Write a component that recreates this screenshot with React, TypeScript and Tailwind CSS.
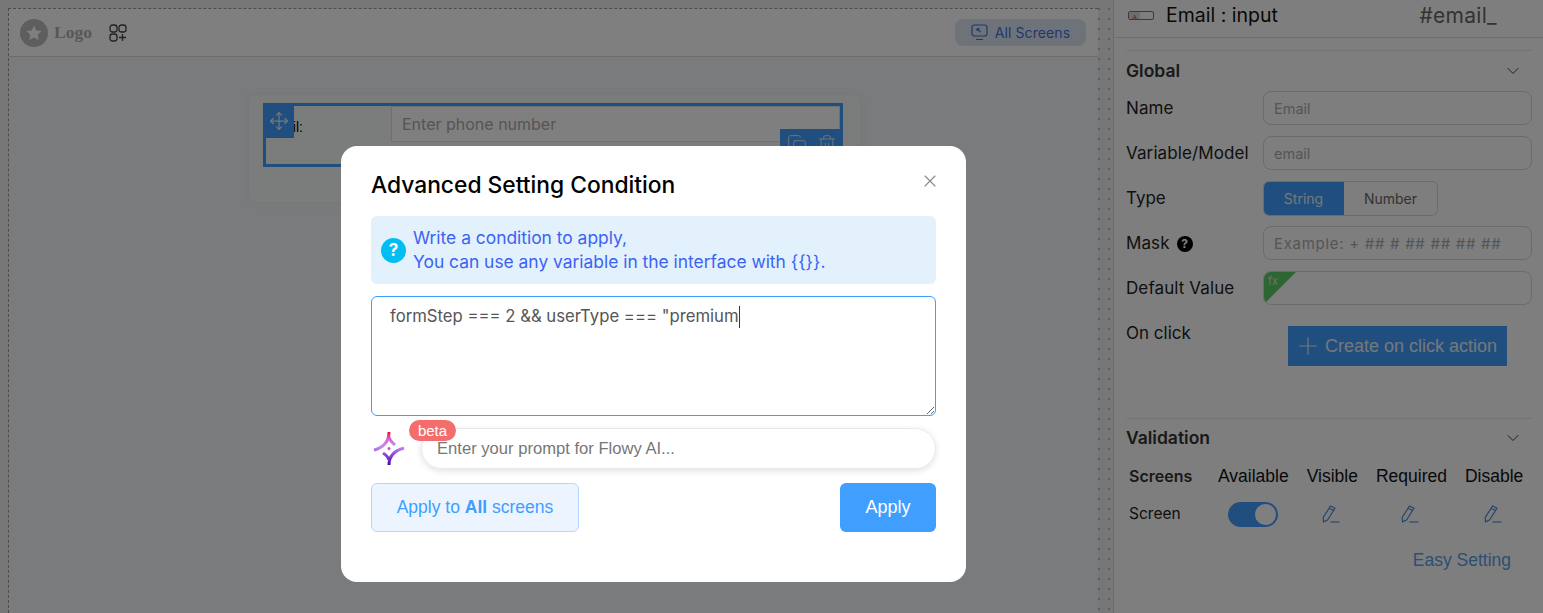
import React from 'react';
import { Plus, ChevronDown, X, Move, Copy, Trash2 } from 'lucide-react';

const dm = "font-['Inter','Noto_Sans',sans-serif]";
const ar = "font-['Liberation_Sans',Arial,sans-serif]";

const PenIcon = () => (
  <svg width="18" height="18" viewBox="0 0 18 18" fill="none" stroke="#3f86d8" strokeWidth="1.1">
    <path d="M8.5 1 L13 3.2 L5.500 15 L1.500 16.800 L1.200 12.500 Z" />
    <path d="M7.300 3.400 L11.800 5.500" />
    <path d="M8.500 17 H17.500" />
  </svg>
);

const Field = ({ label, placeholder, wide }: { label: React.ReactNode; placeholder: string; wide?: boolean }) => (
  <div className="flex items-center h-[34px]">
    <div className="w-[137px] pt-[2px] text-[17px] tracking-[0.1px] text-[#222] shrink-0">{label}</div>
    <input
      readOnly
      placeholder={placeholder}
      className={`flex-1 min-w-0 h-[34px] px-[10px] rounded-lg border border-[#d4d7de] bg-transparent outline-none placeholder:text-[#a8abb2] ${wide ? 'text-[15px] tracking-[0.7px]' : 'text-[14.5px]'}`}
    />
  </div>
);

const SidePanel = () => (
  <aside className={`w-[430px] shrink-0 h-[613px] bg-[#fdfdfd] border-l border-[#d8d8d8] ${dm}`}>
    <div className="h-[38px] flex items-center pl-[14px] pr-[46px] pb-[6px] border-b border-[#dcdcdc]">
      <svg width="26" height="10" viewBox="0 0 26 10" fill="none" className="mr-[12px]">
        <rect x="0.5" y="0.5" width="25" height="8" rx="1.5" stroke="#777" />
        <rect x="1" y="1" width="11" height="7" fill="#e5d5d8" />
        <text x="4" y="7.5" fontSize="7" fill="#c33" fontFamily="Liberation Serif">A</text>
      </svg>
      <span className="text-[19.5px] text-[#111]">Email : input</span>
      <span className="ml-auto text-[21px] tracking-[0.3px] text-[#666]">#email_</span>
    </div>
    <div className="px-[12px] pt-[12px] pr-[11px]">
      <div className="border-t border-[#e8e8e8] pt-[8px]">
        <div className="flex items-center justify-between h-[24px] pr-[9px]">
          <span className="text-[17.5px] font-semibold text-[#333]">Global</span>
          <ChevronDown size={20} strokeWidth={1.2} className="text-[#444]" />
        </div>
        <div className="flex flex-col gap-[11px] mt-[8px]">
          <Field label="Name" placeholder="Email" />
          <Field label="Variable/Model" placeholder="email" />
          <div className="flex items-center h-[34px]">
            <div className="w-[137px] pt-[2px] text-[17px] text-[#222]">Type</div>
            <div className="flex h-[35px] w-[175px] rounded-md border border-[#d4d7de] overflow-hidden text-[14px]">
              <div className="w-[81px] bg-[#409eff] text-[#e8f0f8] flex items-center justify-center -m-px mr-0">String</div>
              <div className="flex-1 flex items-center justify-center text-[#666]">Number</div>
            </div>
          </div>
          <Field
            label={
              <span className="flex items-center gap-[7px]">
                Mask
                <span className="w-[16px] h-[16px] rounded-full bg-black text-white text-[12px] font-bold flex items-center justify-center">?</span>
              </span>
            }
            placeholder="Example: + ## # ## ## ## ##"
            wide
          />
          <div className="flex items-center h-[34px]">
            <div className="w-[137px] pt-[2px] text-[17px] tracking-[0.1px] text-[#222] shrink-0">Default Value</div>
            <div className="relative flex-1 h-[34px] rounded-lg border border-[#d4d7de] overflow-hidden">
              <div className="absolute left-0 top-0 w-0 h-0 border-t-[32px] border-r-[32px] border-t-[#5acb66] border-r-transparent" />
              <span className="absolute left-[4px] top-[1px] text-[11px] leading-[16px] text-[#d8e8d8]">fx</span>
            </div>
          </div>
        </div>
        <div className="flex mt-[21px] h-[40px]">
          <div className="w-[162px] text-[17px] text-[#222] mt-[-5px]">On click</div>
          <button className={`w-[219px] h-[40px] bg-[#409eff] text-[#e8f0f8] text-[18px] flex items-center pl-[6px] gap-[3px] ${ar}`}>
            <Plus size={28} strokeWidth={1} />
            Create on click action
          </button>
        </div>
      </div>
      <div className="border-t border-[#e8e8e8] mt-[52px] pt-[7px]">
        <div className="flex items-center justify-between h-[24px] pr-[9px]">
          <span className="text-[17.5px] font-semibold text-[#333]">Validation</span>
          <ChevronDown size={20} strokeWidth={1.2} className="text-[#444]" />
        </div>
        <div className={`flex items-center gap-[18px] mt-[14px] h-[24px] text-[17.5px] text-[#111] ${ar}`}>
          <span className={`w-[74px] pl-[3px] text-[16px] font-semibold text-[#333] ${dm}`}>Screens</span>
          <span>Available</span>
          <span>Visible</span>
          <span>Required</span>
          <span>Disable</span>
        </div>
        <div className="flex items-center mt-[13px] h-[26px]">
          <span className="w-[102px] pl-[3px] text-[15.500px] text-[#222]">Screen</span>
          <div className="w-[50px] h-[25px] rounded-full bg-[#409eff] flex items-center justify-end pr-[2px]">
            <div className="w-[21px] h-[21px] rounded-full bg-white" />
          </div>
          <div className="w-[18px] ml-[44px]"><PenIcon /></div>
          <div className="w-[18px] ml-[61px]"><PenIcon /></div>
          <div className="w-[18px] ml-[65px]"><PenIcon /></div>
        </div>
        <div className={`text-right mt-[20px] pr-[21px] text-[17.5px] text-[#5a9ee8] ${ar}`}>Easy Setting</div>
      </div>
    </div>
  </aside>
);

const Canvas = () => (
  <div className="flex-1 h-[613px] pl-[8px] pt-[8px] pr-[15px] bg-[#eeeeee] bg-[radial-gradient(#bbbbbb_1.5px,transparent_1.5px)] bg-[length:10px_10px] bg-[position:4px_4px]">
    <div className="h-full border-l border-t border-dashed border-[#999] bg-[#f3f6f8]">
      <div className="h-[48px] bg-white border-b border-[#d8d8d8] flex items-center pl-[11px] pr-[12px]">
        <div className="w-[28px] h-[28px] rounded-full bg-[#bdbdbd] flex items-center justify-center">
          <svg width="18" height="18" viewBox="0 0 24 24" fill="#fff"><path d="M12 2l3 6.6 7.2.8-5.3 4.9 1.4 7.1L12 17.9 5.7 21.4l1.4-7.1L1.800 9.400 9 8.600z" /></svg>
        </div>
        <span className="ml-[6px] text-[17.5px] font-bold text-[#b0b0b0] font-['Liberation_Serif',serif]">Logo</span>
        <svg width="18" height="18" viewBox="0 0 18 18" fill="none" stroke="#444" strokeWidth="1.3" className="ml-[17px]">
          <rect x="1" y="1" width="7" height="7" rx="2.5" />
          <rect x="10" y="1" width="7" height="7" rx="2.5" />
          <rect x="1" y="10" width="7" height="7" rx="2.500" />
          <path d="M13.500 10v7M10 13.500h7" />
        </svg>
        <div className={`ml-auto h-[27px] w-[131px] rounded-lg bg-[#dbe7f3] flex items-center justify-center gap-[7px] text-[14px] tracking-[0.1px] text-[#3f6fd8] ${dm}`}>
          <svg width="17" height="17" viewBox="0 0 17 17" fill="none" stroke="#3f6fd8" strokeWidth="1.200">
            <rect x="1" y="1" width="15" height="11" rx="2.500" />
            <path d="M5 15.500h7M6 4.500l3.500 3.500M6 4.500h2.500M6 4.500v2.500" />
          </svg>
          All Screens
        </div>
      </div>
      <div className="pl-[240px] pt-[38px]">
        <div className={`relative w-[611px] h-[107px] rounded-lg bg-[#f6f8f9] shadow-[0_0_10px_rgba(0,0,0,0.05)] ${dm}`}>
          <div className="absolute left-[14px] top-[8px] w-[580px] h-[64px] border-[3px] border-[#409eff]">
            <span className={`absolute left-[-2px] top-[11px] text-[14px] text-black ${ar}`}>Email:</span>
            <div className="absolute left-[125px] top-0 right-0 h-[36px] bg-white border border-[#dcdfe6] flex items-center px-[10px] text-[16px] text-[#aaa]">Enter phone number</div>
          </div>
          <div className="absolute left-[14px] top-[8px] w-[31px] h-[35px] bg-[#409eff] flex items-center justify-center text-[#e8f0f8]">
            <Move size={20} strokeWidth={1.500} />
          </div>
          <div className="absolute left-[531px] top-[34px] w-[63px] h-[40px] bg-[#409eff] flex justify-center gap-[10px] pt-[5px] text-[#e8f0f8]">
            <Copy size={20} strokeWidth={1.100} />
            <Trash2 size={20} strokeWidth={1.100} />
          </div>
        </div>
      </div>
    </div>
  </div>
);

const FlowyMark = () => (
  <svg width="36" height="36" viewBox="6 6 36 36" fill="none" strokeWidth="3" strokeLinecap="butt" className="shrink-0 mt-[3px]">
    <defs>
      <linearGradient id="flowy" gradientUnits="userSpaceOnUse" x1="0" y1="8" x2="0" y2="40">
        <stop offset="0" stopColor="#f5123f" />
        <stop offset="0.18" stopColor="#d860c8" />
        <stop offset="0.42" stopColor="#c090f4" />
        <stop offset="0.68" stopColor="#8a48d8" />
        <stop offset="1" stopColor="#5408a8" />
      </linearGradient>
    </defs>
    <path d="M24 7 Q24 21 9 25" stroke="url(#flowy)" />
    <path d="M24 12 Q25 16 30 20" stroke="url(#flowy)" />
    <path d="M24 40 Q24 27 39 23" stroke="url(#flowy)" />
    <path d="M24 35 Q23 31 18 28" stroke="url(#flowy)" />
    <circle cx="24" cy="23.500" r="1.500" fill="#c050c0" />
  </svg>
);

const Modal = () => (
  <div className="absolute inset-0 bg-black/50 pl-[341px] pt-[146px]">
    <div className={`relative w-[625px] h-[436px] bg-white rounded-2xl px-[30px] ${dm}`}>
      <X size={20} strokeWidth={1.300} className="absolute right-[26px] top-[25px] text-[#888]" />
      <div className="pt-[24px] h-[70px] text-[22.800px] font-medium leading-[30px] text-black">Advanced Setting Condition</div>
      <div className="h-[68px] rounded-md bg-[#e3f1fc] flex items-center pl-[10px] gap-[7px] text-[17.400px] leading-[24px] text-[#3b63f3]">
        <span className="w-[25px] h-[25px] rounded-full bg-[#00bdf2] text-white text-[17px] font-bold flex items-center justify-center">?</span>
        <div>
          <div>Write a condition to apply,</div>
          <div>You can use any variable in the interface with {'{{}}'}.</div>
        </div>
      </div>
      <div className="mt-[12px] h-[120px] resize-y overflow-auto rounded-md border border-[#409eff] pl-[18px] pt-[7px] text-[16.700px] leading-[24px] text-[#555]">
        formStep === 2 &amp;&amp; userType === "premium<span className="inline-block w-px h-[22px] bg-[#333] align-middle" />
      </div>
      <div className="relative flex items-start mt-[12px] h-[42px]">
        <FlowyMark />
        <div className={`absolute left-[38px] top-[-8px] z-10 h-[21px] w-[47px] rounded-full bg-[#f56c6c] text-white text-[15px] leading-[21px] text-center ${ar}`}>beta</div>
        <div className={`ml-[14px] flex-1 h-[41px] pt-[1px] rounded-full border border-[#e6e8f0] shadow-[0_2px_6px_rgba(0,0,0,0.12)] flex items-center pl-[15px] text-[16.600px] text-[#777] ${ar}`}>
          Enter your prompt for Flowy AI...
        </div>
      </div>
      <div className={`flex justify-between mt-[13px] ${ar}`}>
        <button className="w-[208px] h-[49px] rounded-md bg-[#ecf5ff] border border-[#b3d8ff] text-[17.500px] text-[#409eff]">
          Apply to <b>All</b> screens
        </button>
        <button className="w-[96px] h-[49px] rounded-md bg-[#409eff] text-white text-[18px]">Apply</button>
      </div>
    </div>
  </div>
);

export default function App() {
  return (
    <div className="relative w-[1543px] h-[613px] overflow-hidden flex">
      <Canvas />
      <SidePanel />
      <Modal />
    </div>
  );
}
